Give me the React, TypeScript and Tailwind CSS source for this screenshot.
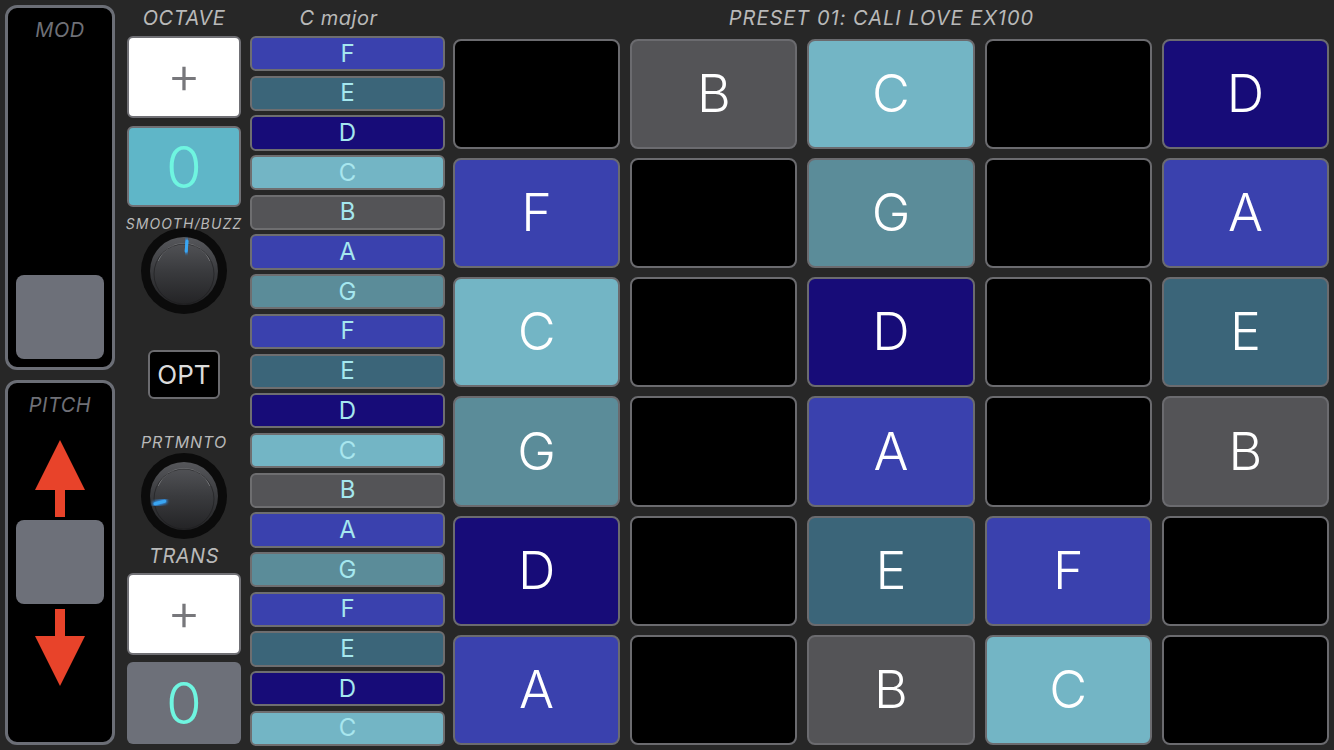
const NOTE_BG: Record<string, string> = {
  F: 'bg-[#3a41ae]',
  A: 'bg-[#3a41ae]',
  E: 'bg-[#3b6579]',
  D: 'bg-[#170c78]',
  C: 'bg-[#73b5c5]',
  B: 'bg-[#545457]',
  G: 'bg-[#5b8c99]',
}

const scale = ['F', 'E', 'D', 'C', 'B', 'A', 'G', 'F', 'E', 'D', 'C', 'B', 'A', 'G', 'F', 'E', 'D', 'C']

const pads: (string | null)[][] = [
  [null, 'B', 'C', null, 'D'],
  ['F', null, 'G', null, 'A'],
  ['C', null, 'D', null, 'E'],
  ['G', null, 'A', null, 'B'],
  ['D', null, 'E', 'F', null],
  ['A', null, 'B', 'C', null],
]

const font = { fontFamily: 'Inter, "Liberation Sans", sans-serif' }

function Knob({ angle, id }: { angle: number; id: string }) {
  // angle in degrees, 0 = straight up, clockwise
  const r = (angle * Math.PI) / 180
  const x1 = 43 + Math.sin(r) * 20
  const y1 = 43 - Math.cos(r) * 20
  const x2 = 43 + Math.sin(r) * 30
  const y2 = 43 - Math.cos(r) * 30
  return (
    <svg width="86" height="86" viewBox="0 0 86 86" className="block">
      <defs>
        <linearGradient id={`kg-${id}`} x1="0" y1="0" x2="0" y2="1">
          <stop offset="0" stopColor="#56575b" />
          <stop offset="0.5" stopColor="#3a3b3e" />
          <stop offset="1" stopColor="#232325" />
        </linearGradient>
        <filter id={`glow-${id}`} x="-50%" y="-50%" width="200%" height="200%">
          <feGaussianBlur stdDeviation="1.6" />
        </filter>
      </defs>
      <circle cx="43" cy="43" r="43" fill="#0b0b0b" />
      <circle cx="43" cy="43" r="34" fill={`url(#kg-${id})`} />
      <path d="M17 33 A28 28 0 0 1 69 33" fill="none" stroke="#8a8b8f" strokeWidth="1" opacity="0.7" />
      <circle cx="43" cy="46" r="30" fill="none" stroke="#1c1c1e" strokeWidth="1" opacity="0.6" />
      <line x1={x1} y1={y1} x2={x2} y2={y2} stroke="#2f9cff" strokeWidth="5" strokeLinecap="round" filter={`url(#glow-${id})`} />
      <line x1={x1} y1={y1} x2={x2} y2={y2} stroke="#3aa6f2" strokeWidth="3" strokeLinecap="round" />
    </svg>
  )
}

function Arrow({ down }: { down?: boolean }) {
  return (
    <svg width="50" height="77" viewBox="0 0 50 77" className={`block ${down ? 'rotate-180' : ''}`}>
      <polygon points="25,0 50,50 0,50" fill="#e8432a" />
      <rect x="20" y="49" width="10" height="28" fill="#e8432a" />
    </svg>
  )
}

function PlusBox() {
  return (
    <div className="h-[82px] rounded-[6px] border-2 border-[#707075] bg-white flex items-center justify-center">
      <span className="text-[52px] font-light leading-none text-[#77777b] -mt-[4px]">+</span>
    </div>
  )
}

export default function App() {
  return (
    <div style={font} className="w-[1334px] h-[750px] bg-[#272727] flex px-[5px] overflow-hidden">
      {/* sliders */}
      <div className="w-[110px] flex flex-col gap-[10px] py-[5px]">
        <div className="h-[365px] rounded-[12px] border-[3px] border-[#6b6e76] bg-black flex flex-col items-center px-[8px] pb-[8px]">
          <div className="h-[44px] leading-[44px] text-[20px] italic text-[#6f7077] tracking-wide">MOD</div>
          <div className="flex-1" />
          <div className="w-[88px] h-[84px] rounded-[8px] bg-[#6d7079]" />
        </div>
        <div className="h-[365px] rounded-[12px] border-[3px] border-[#6b6e76] bg-black flex flex-col items-center px-[8px]">
          <div className="h-[44px] leading-[44px] text-[20px] italic text-[#6f7077] tracking-wide">PITCH</div>
          <div className="mt-[13px]">
            <Arrow />
          </div>
          <div className="mt-[3px] w-[88px] h-[84px] rounded-[8px] bg-[#6d7079]" />
          <div className="mt-[5px]">
            <Arrow down />
          </div>
        </div>
      </div>

      {/* controls */}
      <div className="ml-[12px] w-[114px] flex flex-col">
        <div className="h-[36px] flex items-center justify-center text-[20px] italic text-[#b9b9b9] tracking-wide">OCTAVE</div>
        <PlusBox />
        <div className="mt-[8px] h-[81px] rounded-[6px] border-2 border-[#707075] bg-[#5fb6c8] flex items-center justify-center">
          <span className="text-[58px] font-light leading-none text-[#6ff5e0]">0</span>
        </div>
        <div className="mt-[9px] h-[16px] leading-[16px] text-center text-[14px] italic text-[#b9b9b9] tracking-[0.08em] whitespace-nowrap -mx-[2px]">SMOOTH/BUZZ</div>
        <div className="-mt-[4px] flex justify-center">
          <Knob angle={6} id="a" />
        </div>
        <div className="mt-[36px] flex justify-center">
          <div className="w-[72px] h-[49px] rounded-[6px] border-2 border-[#6b6b6f] bg-black flex items-center justify-center text-[26px] text-[#dcdcdc]">OPT</div>
        </div>
        <div className="mt-[35px] h-[16px] leading-[16px] text-center text-[16px] italic text-[#b9b9b9] tracking-[0.06em]">PRTMNTO</div>
        <div className="mt-[3px] flex justify-center">
          <Knob angle={255} id="b" />
        </div>
        <div className="mt-[7px] h-[20px] leading-[20px] text-center text-[20px] italic text-[#b9b9b9] tracking-wide">TRANS</div>
        <div className="mt-[7px]">
          <PlusBox />
        </div>
        <div className="mt-[7px] h-[82px] rounded-[6px] bg-[#6d7079] flex items-center justify-center">
          <span className="text-[58px] font-light leading-none text-[#6ff5e0]">0</span>
        </div>
      </div>

      {/* scale */}
      <div className="ml-[9px] w-[195px] flex flex-col pb-[4px]">
        <div className="h-[36px] flex items-center justify-center pr-[18px] text-[20px] italic text-[#b9b9b9] tracking-wide">C major</div>
        <div className="flex-1 grid grid-rows-18 gap-y-[4.5px]">
          {scale.map((n, i) => (
            <div
              key={i}
              className={`${NOTE_BG[n]} rounded-[6px] border-2 border-[#6e6e70] flex items-center justify-center text-[24px] leading-none ${n === 'C' ? 'text-[#a8e6ee]' : 'text-[#a5e7ef]'}`}
            >
              {n}
            </div>
          ))}
        </div>
      </div>

      {/* pads */}
      <div className="ml-[8px] w-[876px] flex flex-col pb-[5px]">
        <div className="h-[39px] flex items-center justify-center pr-[19px] pb-[3px] text-[20px] italic text-[#b9b9b9] tracking-[0.05em]">
          PRESET 01: CALI LOVE EX100
        </div>
        <div className="flex-1 grid grid-cols-5 grid-rows-6 gap-x-[10px] gap-y-[9px]">
          {pads.flat().map((n, i) => (
            <div
              key={i}
              className={`${n ? NOTE_BG[n] : 'bg-black'} rounded-[8px] border-2 border-[#6b6b6f] flex items-center justify-center text-[52px] font-light leading-none text-white`}
            >
              {n}
            </div>
          ))}
        </div>
      </div>
    </div>
  )
}
